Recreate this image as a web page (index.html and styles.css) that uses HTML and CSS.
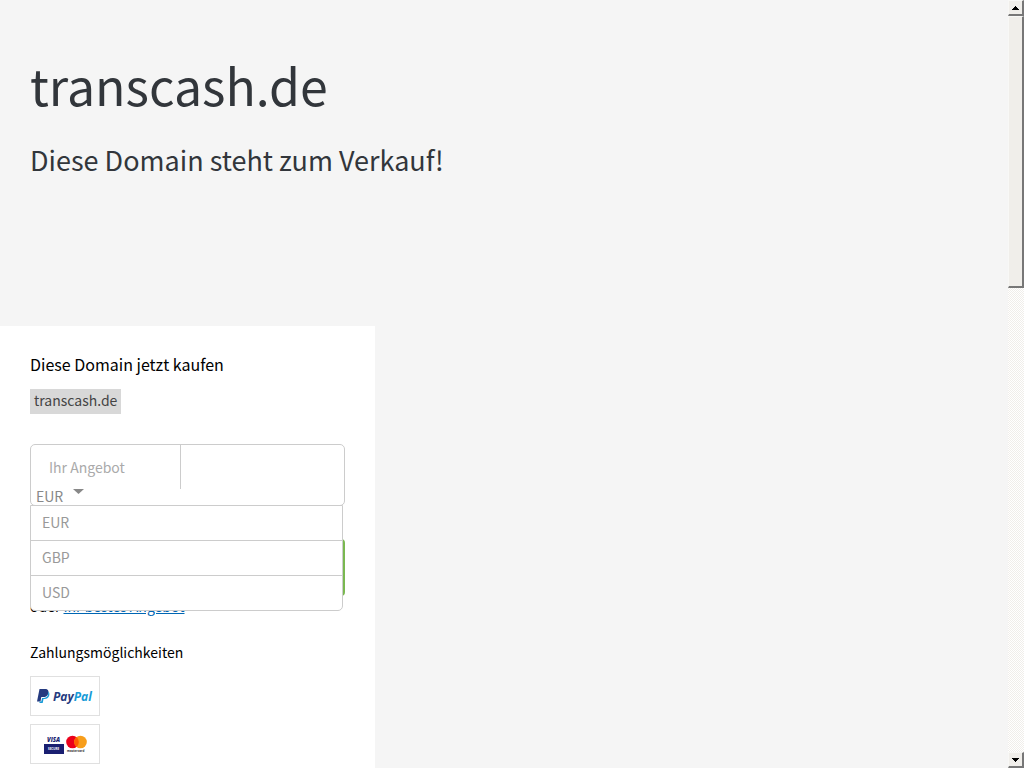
FILE: index.html
```html
<!DOCTYPE html>
<html lang="de">
<head>
<meta charset="utf-8">
<title>transcash.de</title>
<link rel="stylesheet" href="styles.css">
</head>
<body>
<div class="viewport">
  <main class="page">
    <header class="hero">
      <h1 class="domain">transcash.de</h1>
      <h2 class="tagline">Diese Domain steht zum Verkauf!</h2>
    </header>
    <section class="panel">
      <h3 class="panel-title">Diese Domain jetzt kaufen</h3>
      <span class="tag">transcash.de</span>
      <form class="form">
        <div class="offer">
          <input class="price" type="text" placeholder="Ihr Angebot" aria-label="Ihr Angebot">
          <div class="currency">
            <button class="currency-toggle" type="button" aria-haspopup="listbox" aria-expanded="true">EUR
              <svg class="caret" width="11" height="6" viewBox="0 0 11 6" aria-hidden="true"><path d="M0 0h11L5.500 5z" fill="#888"/></svg>
            </button>
            <ul class="menu">
              <li><button class="option" type="button">EUR</button></li>
              <li><button class="option" type="button">GBP</button></li>
              <li><button class="option" type="button">USD</button></li>
            </ul>
          </div>
        </div>
        <button class="submit" type="submit" aria-label="Weiter"></button>
      </form>
      <p class="alt">oder <a class="link" href="#">Ihr bestes Angebot</a></p>
      <h4 class="pay-title">Zahlungsmöglichkeiten</h4>
      <ul class="pay">
        <li class="card">
          <svg width="68" height="38" viewBox="0 0 68 38" role="img" aria-label="PayPal">
            <path d="M8.500 12h5.500c3 0 4 2 3.300 4.400-.6 2.500-2.600 3.600-5 3.600h-2l-.8 4.500H6z" fill="#253b80"/>
            <path d="M17.300 14.500c1.200 1 1.400 2.700.8 4.400-.7 2.100-2.400 3-4.600 3h-1l-.8 4.100H8.400l.3-1.500h1.600l.8-3.600h1.800c2.800 0 4.500-1.800 4.400-6.400z" fill="#179bd7"/>
            <text x="22" y="23.500" class="pp"><tspan fill="#253b80">Pay</tspan><tspan fill="#179bd7">Pal</tspan></text>
          </svg>
        </li>
        <li class="card">
          <svg width="68" height="38" viewBox="0 0 68 38" role="img" aria-label="Visa, Mastercard">
            <text x="16" y="16.500" class="visa" fill="#1a1f71">VISA</text>
            <path d="M13 19h20v10H13z" fill="#1a1f71"/>
            <text x="17" y="25" class="tiny" fill="#fff">SECURE</text>
            <circle cx="41.500" cy="17" r="6.300" fill="#eb001b"/>
            <circle cx="49.500" cy="17" r="6.300" fill="#f79e1b"/>
            <path d="M45.500 12.100a6.300 6.300 0 0 1 0 9.800 6.300 6.300 0 0 1 0-9.800z" fill="#ff5f00"/>
            <text x="36" y="27" class="tiny" fill="#333">mastercard</text>
          </svg>
        </li>
      </ul>
    </section>
  </main>
  <div class="bar" aria-hidden="true">
    <div class="arrow"><svg width="7" height="4" viewBox="0 0 7 4" shape-rendering="crispEdges"><path d="M3 0h1v1h1v1h1v1h1v1H0V3h1V2h1V1h1z"/></svg></div>
    <div class="track"><div class="thumb"></div></div>
    <div class="arrow"><svg width="7" height="4" viewBox="0 0 7 4" shape-rendering="crispEdges"><path d="M0 0h7v1H6v1H5v1H4v1H3V3H2V2H1V1H0z"/></svg></div>
  </div>
</div>
</body>
</html>
```
FILE: styles.css
```css
* { box-sizing: border-box; }
body {
  margin: 0;
  background: #f5f5f5;
  color: #000;
  font: 14px/20px "Noto Sans CJK SC", "Noto Sans", sans-serif;
}
h1, h2, h3, h4, p, ul { margin: 0; padding: 0; font-weight: 400; list-style: none; }
button, input { font: inherit; margin: 0; }
.viewport { display: flex; height: 100vh; overflow: hidden; }
.page { flex: 1; overflow: hidden; }
.hero { padding: 48px 30px 144px; color: #32363b; }
.domain { font-size: 50px; line-height: 72px; margin-bottom: 18px; }
.tagline { font-size: 27px; line-height: 44px; }
.panel { max-width: 375px; padding: 28px 30px; background: #fff; }
.panel-title { font-size: 16px; line-height: 20px; margin-bottom: 15px; }
.tag { display: inline-block; height: 25px; padding: 0 4px; line-height: 23px; background: #d8d8d8; color: #444; vertical-align: top; }
.form { margin-top: 30px; }
.offer { height: 62px; border: 1px solid #ccc; border-radius: 5px; margin-bottom: 33px; }
.price {
  display: block;
  width: 150px;
  height: 44px;
  padding: 0 18px;
  border: 0;
  border-right: 1px solid #ccc;
  background: none;
  color: #999;
}
.price::placeholder { color: #aaa; opacity: 1; }
.currency { position: relative; }
.currency-toggle {
  display: flex;
  gap: 10px;
  padding: 0 5px;
  height: 16px;
  line-height: 14px;
  border: 0;
  background: none;
  color: #888;
}
.menu {
  position: absolute;
  z-index: 1;
  top: 16px;
  left: -1px;
  right: 1px;
  border: 1px solid #ccc;
  border-radius: 0 0 5px 5px;
  background: #fff;
}
.menu li + li { border-top: 1px solid #ccc; }
.option {
  display: block;
  width: 100%;
  height: 34px;
  padding: 0 11px 2px;
  border: 0;
  background: none;
  color: #999;
  text-align: left;
}
.submit { display: block; width: 100%; height: 57px; border: 0; border-radius: 4px; background: #7ab850; }
.alt { margin-bottom: 26px; }
.link { color: #0066b3; }
.pay-title { margin-bottom: 14px; }
.pay { display: flex; flex-direction: column; gap: 8px; }
.card { width: 70px; height: 40px; border: 1px solid #e0e0e0; }
.card svg { display: block; }
.pp { font: italic 700 12px "Open Sans", sans-serif; }
.visa { font: italic 800 6px "Open Sans", sans-serif; }
.tiny { font: 700 3px "Open Sans", sans-serif; }
.bar { display: flex; flex-direction: column; width: 16px; }
.arrow, .thumb {
  background: #f0eeea;
  border: 1px solid #f8f8f6;
  border-right: 2px solid #777;
  border-bottom: 2px solid #777;
}
.arrow { display: flex; align-items: center; justify-content: center; height: 16px; }
.track { flex: 1; background: repeating-conic-gradient(#fff 0 25%, #f0eeea 0 50%) 0 0 / 2px 2px; }
.thumb { height: 37%; }
```
